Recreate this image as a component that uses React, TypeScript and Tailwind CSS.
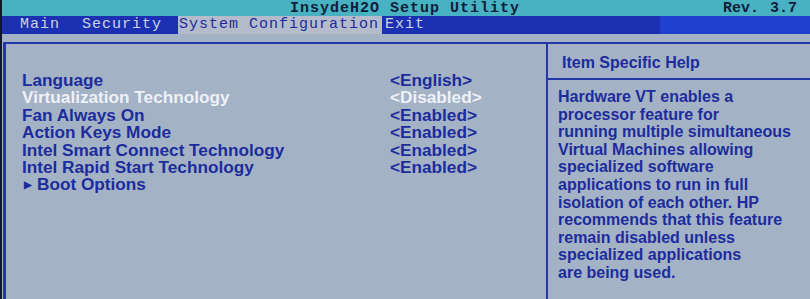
import React from 'react';

const items = [
  { label: 'Language', value: '<English>' },
  { label: 'Virtualization Technology', value: '<Disabled>', active: true },
  { label: 'Fan Always On', value: '<Enabled>' },
  { label: 'Action Keys Mode', value: '<Enabled>' },
  { label: 'Intel Smart Connect Technology', value: '<Enabled>' },
  { label: 'Intel Rapid Start Technology', value: '<Enabled>' },
];

const help = [
  'Hardware VT enables a',
  'processor feature for',
  'running multiple simultaneous',
  'Virtual Machines allowing',
  'specialized software',
  'applications to run in full',
  'isolation of each other. HP',
  'recommends that this feature',
  'remain disabled unless',
  'specialized applications',
  'are being used.',
];

export default function App() {
  return (
    <div className="w-[810px] h-[299px] overflow-hidden flex flex-col bg-[#a4b2c6] border-l-2 border-[#111827] font-['Liberation_Sans',Arial,sans-serif]">
      {/* Title bar */}
      <div className="h-[16px] bg-[#48b2c2] flex items-center relative font-['Liberation_Mono',monospace] font-bold text-[15px] text-[#0f1e3a] leading-none">
        <span className="absolute left-[288px] tracking-[1px]">InsydeH2O Setup Utility</span>
        <span className="absolute left-[721px]">Rev.</span>
        <span className="absolute left-[768px]">3.7</span>
      </div>

      {/* Menu bar */}
      <div className="h-[18px] flex font-['Liberation_Mono',monospace] text-[15px] leading-[18px] tracking-[1px] text-[#ccd3e0]">
        <div className="flex bg-[#1c30b4] w-[658px]">
          <span className="pl-[18px] w-[80px]">Main</span>
          <span className="w-[96px]">Security</span>
          <span className="bg-[#b4bccb] text-[#1c2a9e] w-[204px] pl-[1px]">System Configuration</span>
          <span className="pl-[3px]">Exit</span>
        </div>
        <div className="flex-1 bg-[#2040d0]" />
      </div>

      {/* Panel */}
      <div className="flex-1 mt-[8px] ml-[1px] border-t-2 border-l-[3px] border-[#2536a8] flex">
        <div className="w-[540px] pt-[28px] pl-[16px] text-[17.2px] font-bold leading-[17.4px] text-[#1c2c9c]">
          {items.map((it) => (
            <div key={it.label} className={`flex ${it.active ? 'text-[#eef1f6]' : ''}`}>
              <span className="w-[368px]">{it.label}</span>
              <span>{it.value}</span>
            </div>
          ))}
          <div className="flex items-center">
            <span className="text-[10px] pr-[5px] pl-[2px]">▶</span>
            <span>Boot Options</span>
          </div>
        </div>
        <div className="flex-1 border-l-2 border-[#2536a8] flex flex-col">
          <div className="h-[36px] border-b-2 border-[#2536a8] pl-[14px] pt-[3px] flex items-center text-[16px] font-bold text-[#1c2c9c]">
            Item Specific Help
          </div>
          <div className="pl-[10px] pt-[8px] text-[16px] font-bold leading-[17.6px] text-[#1c2c9c]">
            {help.map((l) => (
              <div key={l}>{l}</div>
            ))}
          </div>
        </div>
      </div>
    </div>
  );
}
